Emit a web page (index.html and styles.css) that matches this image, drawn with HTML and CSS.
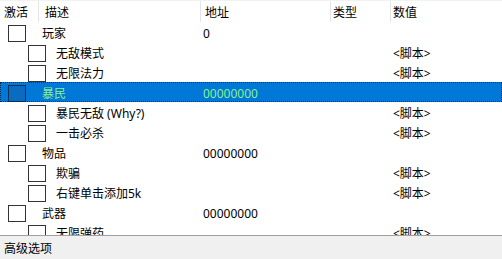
FILE: index.html
```html
<!DOCTYPE html>
<html>
<head>
<meta charset="utf-8" />
<title>作弊表</title>
<link rel="stylesheet" href="styles.css">
</head>
<body>
<div class="win">
  <div class="list">
    <div class="head">
      <div class="h c_act">激活</div>
      <div class="h c_desc">描述</div>
      <div class="h c_addr">地址</div>
      <div class="h c_type">类型</div>
      <div class="h c_val">数值</div>
    </div>

    <div class="row group">
      <div class="name"><span class="chk"></span><span>玩家</span></div>
      <div class="addr">0</div><div class="type"></div><div class="val"></div>
    </div>
    <div class="row">
      <div class="name"><span class="chk"></span><span>无敌模式</span></div>
      <div class="addr"></div><div class="type"></div><div class="val">&lt;脚本&gt;</div>
    </div>
    <div class="row">
      <div class="name"><span class="chk"></span><span>无限法力</span></div>
      <div class="addr"></div><div class="type"></div><div class="val">&lt;脚本&gt;</div>
    </div>
    <div class="row group sel">
      <div class="name"><span class="chk"></span><span>暴民</span></div>
      <div class="addr">00000000</div><div class="type"></div><div class="val"></div>
    </div>
    <div class="row">
      <div class="name"><span class="chk"></span><span>暴民无敌 (Why?)</span></div>
      <div class="addr"></div><div class="type"></div><div class="val">&lt;脚本&gt;</div>
    </div>
    <div class="row">
      <div class="name"><span class="chk"></span><span>一击必杀</span></div>
      <div class="addr"></div><div class="type"></div><div class="val">&lt;脚本&gt;</div>
    </div>
    <div class="row group">
      <div class="name"><span class="chk"></span><span>物品</span></div>
      <div class="addr">00000000</div><div class="type"></div><div class="val"></div>
    </div>
    <div class="row">
      <div class="name"><span class="chk"></span><span>欺骗</span></div>
      <div class="addr"></div><div class="type"></div><div class="val">&lt;脚本&gt;</div>
    </div>
    <div class="row">
      <div class="name"><span class="chk"></span><span>右键单击添加5k</span></div>
      <div class="addr"></div><div class="type"></div><div class="val">&lt;脚本&gt;</div>
    </div>
    <div class="row group">
      <div class="name"><span class="chk"></span><span>武器</span></div>
      <div class="addr">00000000</div><div class="type"></div><div class="val"></div>
    </div>
    <div class="row">
      <div class="name"><span class="chk"></span><span>无限弹药</span></div>
      <div class="addr"></div><div class="type"></div><div class="val">&lt;脚本&gt;</div>
    </div>
  </div>
  <div class="foot">高级选项</div>
</div>
</body>
</html>
```

FILE: styles.css
```css
*{
	margin:0;
	padding:0;
	box-sizing:border-box;
	}
body{
	background:#fff;
	font-family:"Noto Sans","Noto Sans CJK SC",sans-serif;
	font-size:12px;
	color:#000;
	overflow:hidden;
	}
.win{
	width:502px;
	height:259px;
	display:flex;
	flex-direction:column;
	}
.list{
	flex:1;
	overflow:hidden;
	}
.head{
	display:flex;
	height:22px;
	border-top:1px solid #f2f2f2;
	}
.h{
	line-height:18px;
	padding-top:3px;
	border-right:1px solid #e5e5e5;
	padding-left:4px;
	}
.c_act{ width:39px; }
.c_desc{ width:162px; padding-left:6px; }
.c_addr{ width:130px; padding-left:4px; }
.c_type{ width:60px; padding-left:2px; }
.c_val{ flex:1; border-right:none; padding-left:2px; }

.row{
	display:flex;
	height:20px;
	line-height:17px;
	padding-top:3px;
	}
.name{
	width:201px;
	display:flex;
	padding-left:28px;
	white-space:nowrap;
	}
.chk{
	width:18px;
	height:17px;
	border:1px solid #333;
	background:#fff;
	margin-right:10px;
	}
.group .name{ padding-left:8px; }
.group .chk{ margin-right:16px; }
.addr{ width:130px; padding-left:2px; }
.type{ width:62px; }
.val{ flex:1; }

.sel{
	background:#0078d7;
	color:#86f286;
	outline:1px dotted #0b2a4a;
	outline-offset:-1px;
	}
.sel .chk{
	background:#0a6cc0;
	border-color:#0e2f52;
	}

.foot{
	height:24px;
	border-top:1px solid #a0a0a0;
	background:#f0f0f0;
	line-height:20px;
	padding-top:3px;
	padding-left:4px;
	}
```
